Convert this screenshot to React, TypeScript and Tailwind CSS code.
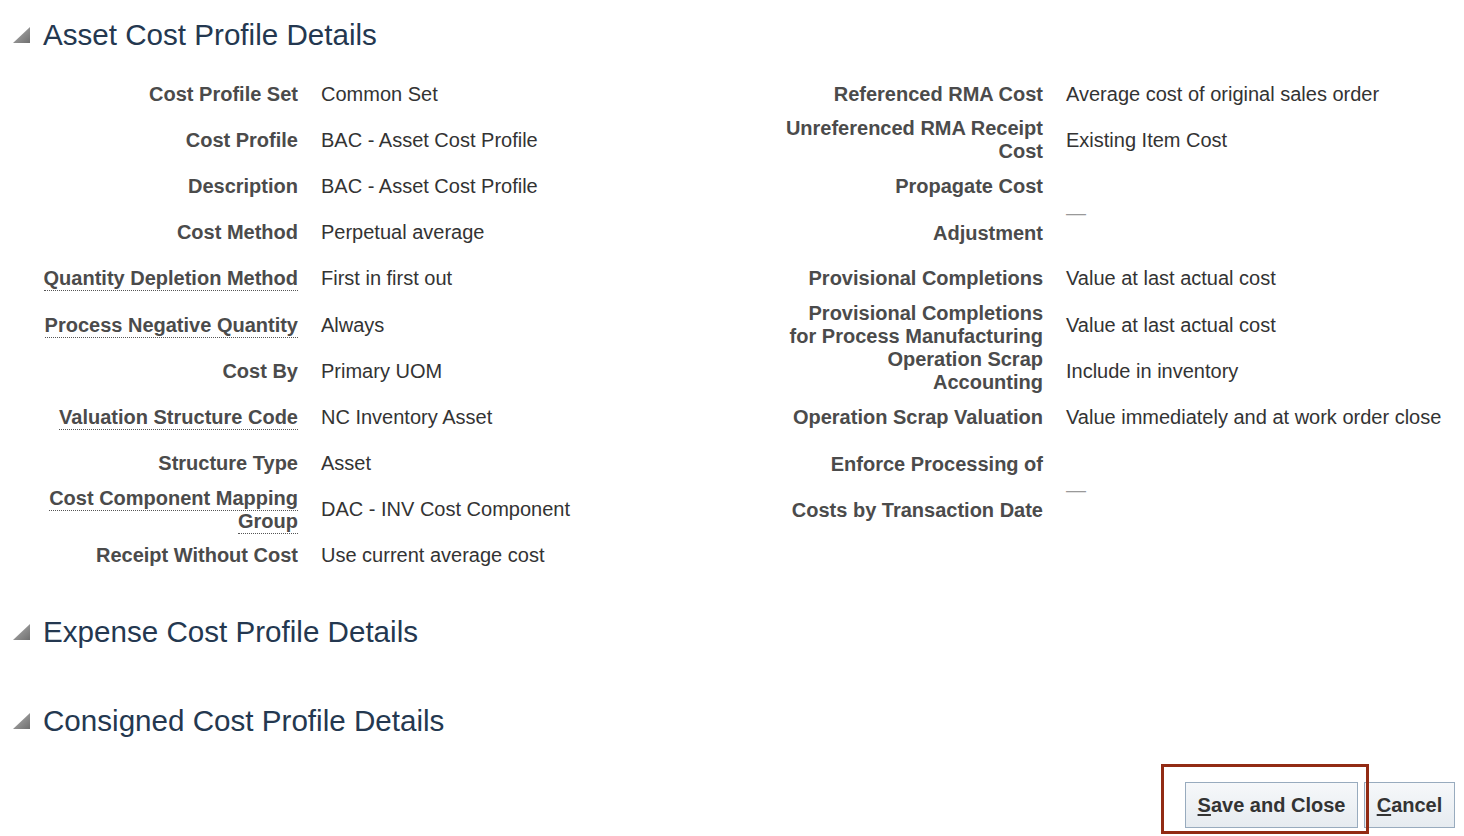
import React from 'react';

type Row = {
  label: React.ReactNode;
  value?: string;
  dotted?: boolean;
  tall?: boolean;
};

const leftRows: Row[] = [
  { label: 'Cost Profile Set', value: 'Common Set' },
  { label: 'Cost Profile', value: 'BAC - Asset Cost Profile' },
  { label: 'Description', value: 'BAC - Asset Cost Profile' },
  { label: 'Cost Method', value: 'Perpetual average' },
  { label: 'Quantity Depletion Method', value: 'First in first out', dotted: true },
  { label: 'Process Negative Quantity', value: 'Always', dotted: true },
  { label: 'Cost By', value: 'Primary UOM' },
  { label: 'Valuation Structure Code', value: 'NC Inventory Asset', dotted: true },
  { label: 'Structure Type', value: 'Asset' },
  {
    label: (
      <>
        Cost Component Mapping
        <br />
        Group
      </>
    ),
    value: 'DAC - INV Cost Component',
    dotted: true,
  },
  { label: 'Receipt Without Cost', value: 'Use current average cost' },
];

const rightRows: Row[] = [
  { label: 'Referenced RMA Cost', value: 'Average cost of original sales order' },
  {
    label: (
      <>
        Unreferenced RMA Receipt
        <br />
        Cost
      </>
    ),
    value: 'Existing Item Cost',
  },
  {
    label: (
      <>
        Propagate Cost
        <br />
        Adjustment
      </>
    ),
    tall: true,
  },
  { label: 'Provisional Completions', value: 'Value at last actual cost' },
  {
    label: (
      <>
        Provisional Completions
        <br />
        for Process Manufacturing
      </>
    ),
    value: 'Value at last actual cost',
  },
  {
    label: (
      <>
        Operation Scrap
        <br />
        Accounting
      </>
    ),
    value: 'Include in inventory',
  },
  { label: 'Operation Scrap Valuation', value: 'Value immediately and at work order close' },
  {
    label: (
      <>
        Enforce Processing of
        <br />
        Costs by Transaction Date
      </>
    ),
    tall: true,
  },
];

function SectionHeading({ title }: { title: string }) {
  return (
    <div className="flex items-center gap-[13px] h-[34px] pl-[13px]">
      <svg width="17" height="16" viewBox="0 0 17 16">
        <defs>
          <linearGradient id="tri" x1="0" y1="0" x2="1" y2="1">
            <stop offset="0" stopColor="#b4b4b4" />
            <stop offset="1" stopColor="#6f6f6f" />
          </linearGradient>
        </defs>
        <polygon points="17,0 17,16 0,16" fill="url(#tri)" />
      </svg>
      <h2 className="text-[29.6px] leading-[34px] text-[#243850] font-normal">{title}</h2>
    </div>
  );
}

function FormRow({ row, labelWidth }: { row: Row; labelWidth: string }) {
  return (
    <div className={`flex items-center ${row.tall ? 'h-[92.4px]' : 'h-[46.2px]'}`}>
      <div
        className={`${labelWidth} shrink-0 text-right font-bold text-[20px] text-[#4b4b4b] ${
          row.tall ? 'leading-[46.2px]' : 'leading-[23px]'
        }`}
      >
        {row.dotted ? (
          <span className="border-b border-dotted border-[#555] pb-[1px]">{row.label}</span>
        ) : (
          row.label
        )}
      </div>
      {row.value ? (
        <div className="ml-[23px] text-[20px] leading-[23px] text-[#333]">{row.value}</div>
      ) : (
        <div className="ml-[23px] pt-[8px] text-[20px] leading-[23px] text-[#999]">—</div>
      )}
    </div>
  );
}

export default function App() {
  return (
    <div className="w-[1464px] h-[836px] bg-white overflow-hidden relative font-['Liberation_Sans',Arial,sans-serif]">
      <div className="pt-[18px]">
        <SectionHeading title="Asset Cost Profile Details" />
      </div>

      {/* Asset cost profile form */}
      <div className="flex mt-[19px]">
        <div className="w-[763px] shrink-0">
          {leftRows.map((r, i) => (
            <FormRow key={i} row={r} labelWidth="w-[298px]" />
          ))}
        </div>
        <div className="flex-1">
          {rightRows.map((r, i) => (
            <FormRow key={i} row={r} labelWidth="w-[280px]" />
          ))}
        </div>
      </div>

      <div className="mt-[36px]">
        <SectionHeading title="Expense Cost Profile Details" />
      </div>
      <div className="mt-[55px]">
        <SectionHeading title="Consigned Cost Profile Details" />
      </div>

      {/* Footer buttons */}
      <div className="flex justify-end gap-[6px] pr-[9px] mt-[44px]">
        <button className="w-[173px] h-[46px] border border-[#98abbe] bg-gradient-to-b from-[#f6f8fa] to-[#e6ebf0] text-[20px] font-bold text-[#333]">
          <span className="underline underline-offset-2">S</span>ave and Close
        </button>
        <button className="w-[91px] h-[46px] border border-[#98abbe] bg-gradient-to-b from-[#f6f8fa] to-[#e6ebf0] text-[20px] font-bold text-[#333]">
          <span className="underline underline-offset-2">C</span>ancel
        </button>
      </div>

      {/* highlight annotation */}
      <div className="absolute left-[1161px] top-[764px] w-[208px] h-[70px] border-[3px] border-[#922b14] pointer-events-none" />
    </div>
  );
}
